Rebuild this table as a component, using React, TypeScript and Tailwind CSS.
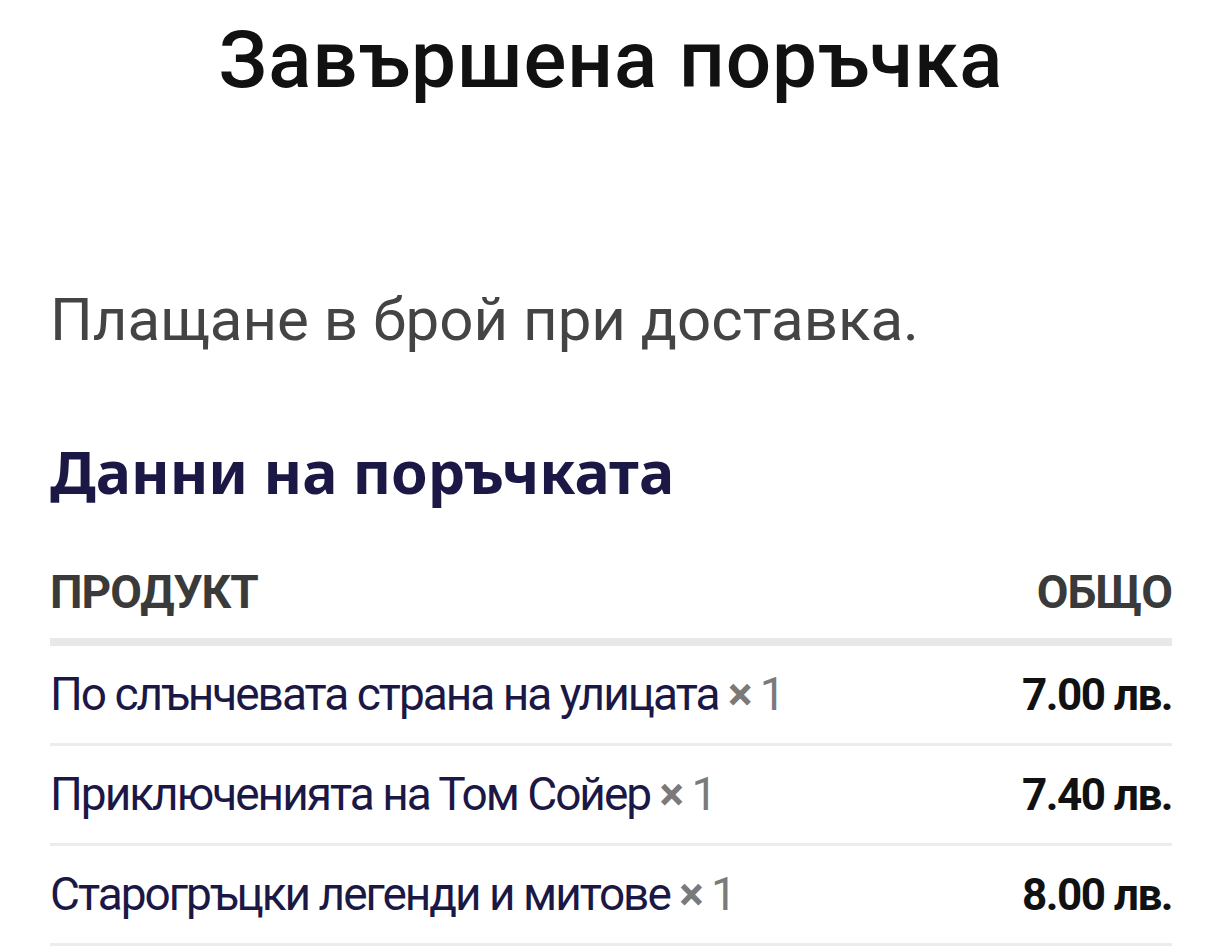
import React from 'react';

type OrderItem = { name: string; qty: number; total: string };

const items: OrderItem[] = [
  { name: 'По слънчевата страна на улицата', qty: 1, total: '7.00 лв.' },
  { name: 'Приключенията на Том Сойер', qty: 1, total: '7.40 лв.' },
  { name: 'Старогръцки легенди и митове', qty: 1, total: '8.00 лв.' },
];

const ItemRow: React.FC<{ item: OrderItem }> = ({ item }) => (
  <div className="flex items-center justify-between h-[100px] border-b-[3px] border-[#ececec]">
    <span className="text-[46px] text-[#1b1846] tracking-[-2px]">
      {item.name} <span className="text-[#7a7a7a]"><span className="font-bold">×</span> {item.qty}</span>
    </span>
    <span className="text-[44px] font-bold text-[#111] tracking-[-1.5px]">{item.total}</span>
  </div>
);

export default function App() {
  return (
    <div className="min-h-screen bg-white pl-[50px] pr-[48px] font-['Roboto',sans-serif]">
      <h1 className="pt-[10px] text-center text-[80px] leading-[100px] font-medium text-[#111] tracking-[1px]">
        Завършена поръчка
      </h1>

      <p className="mt-[175px] text-[60px] leading-[70px] text-[#444]">Плащане в брой при доставка.</p>

      <h2 className="mt-[81px] text-[59px] leading-[70px] font-bold text-[#1b1846] font-['Noto_Sans',sans-serif]">
        Данни на поръчката
      </h2>

      <div className="mt-[60px] flex items-end justify-between pb-[20px] border-b-[8px] border-[#e8e8e8]">
        <span className="text-[46px] leading-[52px] font-bold text-[#3a3a3a] tracking-[-1px]">ПРОДУКТ</span>
        <span className="text-[46px] leading-[52px] font-bold text-[#3a3a3a] tracking-[-1px]">ОБЩО</span>
      </div>

      {items.map((it) => (
        <ItemRow key={it.name} item={it} />
      ))}
    </div>
  );
}
